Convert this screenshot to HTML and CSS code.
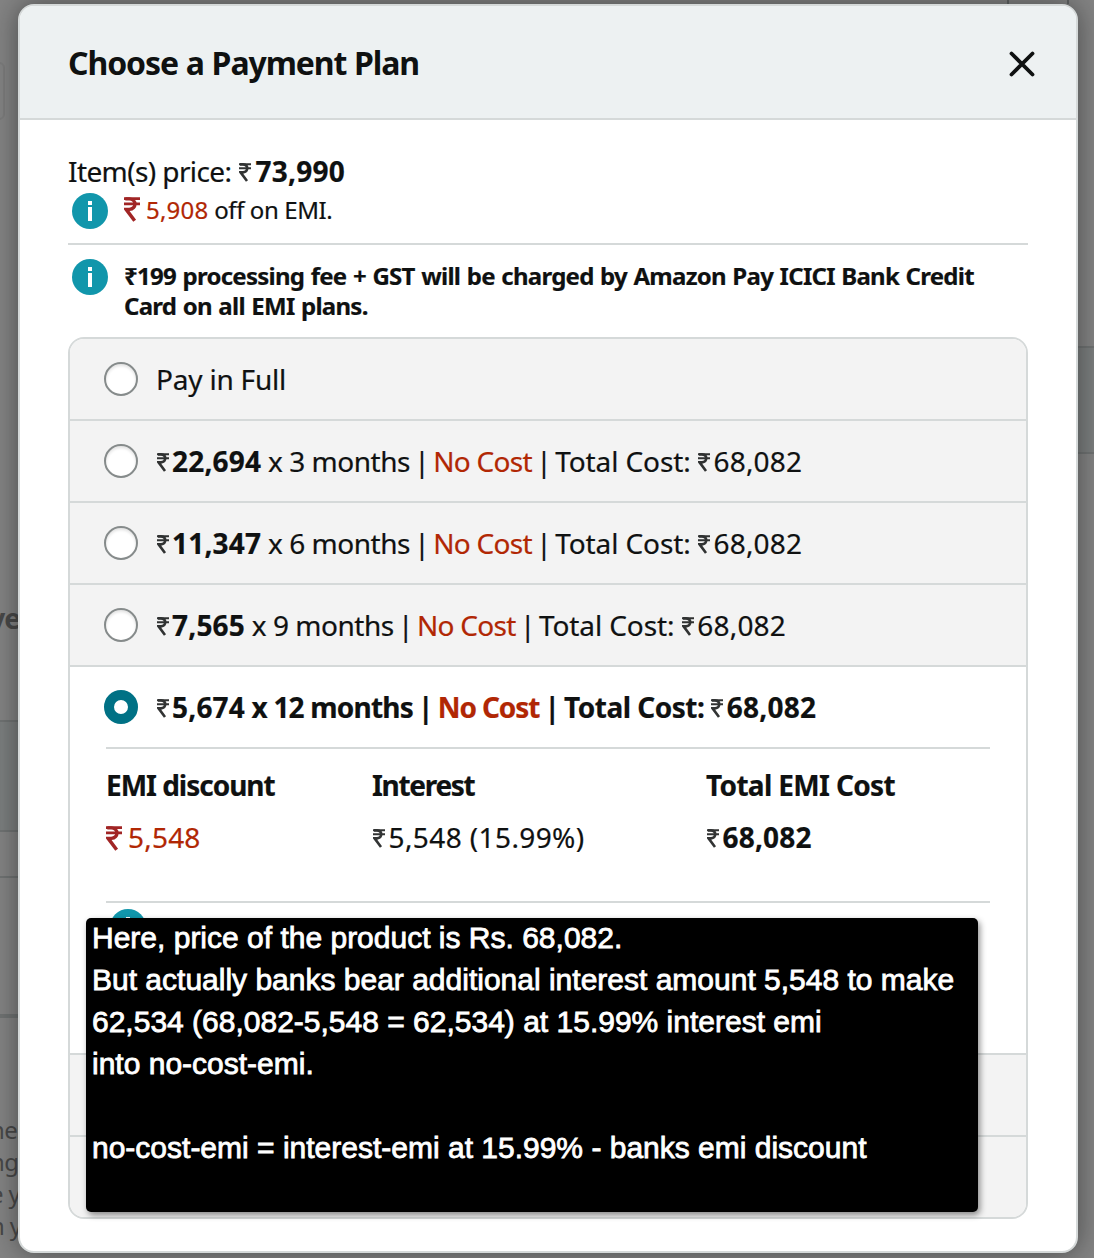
FILE: index.html
```html
<!DOCTYPE html>
<html lang="en">
<head>
<meta charset="utf-8">
<title>Choose a Payment Plan</title>
<link rel="stylesheet" href="styles.css">
</head>
<body>
<svg class="defs" aria-hidden="true">
  <symbol id="rupee" viewBox="0 0 12 19" preserveAspectRatio="none">
    <path d="M0 1.2H12M0 5.2H12" fill="none" stroke="currentColor" stroke-width="2"/>
    <path d="M1 1.4H4C9.6 1.7 9.6 9 4 9.4H1.6L8 18" fill="none" stroke="currentColor" stroke-width="2.6"/>
  </symbol>
</svg>

<div class="backdrop" aria-hidden="true">
  <div class="edge-box"></div>
  <div class="tick tick-a"></div>
  <div class="tick tick-b"></div>
  <div class="right-panel"></div>
  <div class="left-title">ve</div>
  <div class="left-panel"></div>
  <div class="rule rule-a"></div>
  <div class="rule rule-b"></div>
  <div class="left-copy">nes<br>ng<br>e y<br>n y</div>
</div>

<main class="dialog">
  <header class="dialog-header">
    <h1>Choose a Payment Plan</h1>
    <svg class="close" viewBox="0 0 26 26"><path d="M2.5 2.5L23.5 23.5M23.5 2.5L2.5 23.5"/></svg>
  </header>

  <div class="dialog-body">
    <div class="price">Item(s) price: <svg class="rs"><use href="#rupee"/></svg><b class="num">73,990</b></div>
    <div class="offer">
      <svg class="info" viewBox="0 0 36 36"><circle cx="18" cy="18" r="18"/><path d="M16 8h4v4h-4zM16 14h4v14h-4z"/></svg>
      <div><svg class="rs rs-red"><use href="#rupee"/></svg><span class="red num">5,908</span> off on EMI.</div>
    </div>
    <div class="fee">
      <svg class="info" viewBox="0 0 36 36"><circle cx="18" cy="18" r="18"/><path d="M16 8h4v4h-4zM16 14h4v14h-4z"/></svg>
      <p>₹199 processing fee + GST will be charged by Amazon Pay ICICI Bank Credit<br>Card on all EMI plans.</p>
    </div>

    <div class="plans">
      <div class="plan"><i class="radio"></i><span class="label full">Pay in Full</span></div>
      <div class="plan"><i class="radio"></i><span class="label"><svg class="rs"><use href="#rupee"/></svg><b class="num">22,694</b> x 3 months <span class="bar">|</span> <span class="red nc">No Cost</span> <span class="bar">|</span> <span class="tc">Total Cost:</span> <svg class="rs"><use href="#rupee"/></svg><span class="num">68,082</span></span></div>
      <div class="plan"><i class="radio"></i><span class="label"><svg class="rs"><use href="#rupee"/></svg><b class="num">11,347</b> x 6 months <span class="bar">|</span> <span class="red nc">No Cost</span> <span class="bar">|</span> <span class="tc">Total Cost:</span> <svg class="rs"><use href="#rupee"/></svg><span class="num">68,082</span></span></div>
      <div class="plan"><i class="radio"></i><span class="label"><svg class="rs"><use href="#rupee"/></svg><b class="num">7,565</b> x 9 months <span class="bar">|</span> <span class="red nc">No Cost</span> <span class="bar">|</span> <span class="tc">Total Cost:</span> <svg class="rs"><use href="#rupee"/></svg><span class="num">68,082</span></span></div>
      <div class="plan selected">
        <div class="pick"><i class="radio on"></i><span class="label strong"><svg class="rs"><use href="#rupee"/></svg><b class="num">5,674</b> x 12 months <span class="bar">|</span> <span class="red nc">No Cost</span> <span class="bar">|</span> <span class="tc">Total Cost:</span> <svg class="rs"><use href="#rupee"/></svg><span class="num">68,082</span></span></div>
        <div class="breakdown">
          <div><h2>EMI discount</h2><div class="value red"><svg class="rs rs-red"><use href="#rupee"/></svg><span class="num">5,548</span></div></div>
          <div><h2 class="tight">Interest</h2><div class="value"><svg class="rs"><use href="#rupee"/></svg><span class="num pct">5,548 (15.99%)</span></div></div>
          <div><h2 class="wide">Total EMI Cost</h2><div class="value"><svg class="rs"><use href="#rupee"/></svg><b class="num">68,082</b></div></div>
        </div>
        <svg class="info" viewBox="0 0 36 36"><circle cx="18" cy="18" r="18"/><path d="M16 8h4v4h-4zM16 14h4v14h-4z"/></svg>
      </div>
      <div class="plan"></div>
      <div class="plan"></div>
    </div>
  </div>
</main>

<aside class="note"><p>Here, price of the product is Rs. 68,082.
But actually banks bear additional interest amount 5,548 to make
62,534 (68,082-5,548 = 62,534) at 15.99% interest emi
into no-cost-emi.

no-cost-emi = interest-emi at 15.99% - banks emi discount</p></aside>
</body>
</html>
```
FILE: styles.css
```css
* { box-sizing: border-box; }

body {
  margin: 0;
  padding: 4px 16px 5px 18px;
  height: 1258px;
  position: relative;
  overflow: hidden;
  background: #848484;
  color: #0f1111;
  font: 28px/40px "Noto Sans", sans-serif;
}

h1, h2, p { margin: 0; }
.defs { position: absolute; width: 0; height: 0; }

/* dimmed page behind the dialog */
.backdrop { position: absolute; inset: 0; color: #484848; }
.backdrop > div { position: absolute; }
.edge-box { left: -20px; top: 62px; width: 25px; height: 58px; border: 2px solid #7c7c7c; border-radius: 6px; }
.tick { top: 0; width: 2px; height: 4px; background: #606363; }
.tick-a { left: 1007px; }
.tick-b { left: 1067px; }
.right-panel { right: 0; top: 346px; width: 20px; height: 108px; background: #7c7f7f; border: solid #707373; border-width: 2px 0; }
.left-title { right: 1074px; top: 598px; font-weight: bold; letter-spacing: -1px; }
.left-panel { left: 0; top: 720px; width: 20px; height: 112px; background: #7c7f7f; border: solid #707373; border-width: 2px 0; }
.rule { left: 0; width: 20px; background: #707373; }
.rule-a { top: 876px; height: 2px; }
.rule-b { top: 1014px; height: 4px; }
.left-copy { left: -10px; top: 1114px; font-size: 24px; line-height: 32px; letter-spacing: -.7px; white-space: nowrap; }

/* dialog */
.dialog {
  position: relative;
  height: 1249px;
  border: 2px solid #d5d9d9;
  border-radius: 16px;
  background: #fff;
  box-shadow: 0 0 28px rgba(15, 17, 17, .5);
}
.dialog-header {
  display: flex;
  justify-content: space-between;
  align-items: center;
  height: 114px;
  padding: 0 41px 0 48px;
  background: #edf1f2;
  border-bottom: 2px solid #d5d9d9;
  border-radius: 14px 14px 0 0;
}
h1 { padding-top: 1px; font-size: 32px; line-height: 44px; letter-spacing: -1.1px; word-spacing: .6px; }
.close { width: 26px; height: 26px; margin-top: 3px; fill: none; stroke: #0f1111; stroke-width: 3.8; stroke-linecap: round; }
.dialog-body { padding: 31px 48px 0; -webkit-text-stroke: .2px; }

.num { letter-spacing: .2px; }
.pct { letter-spacing: .4px; }
.red { color: #b12704; }
.rs { width: 12px; height: 19px; margin: 0 4.5px 0 1px; vertical-align: 0; filter: blur(.5px); opacity: .85; }
.rs-red { width: 16px; height: 25px; margin: 0 6px 0 0; color: #9c1a1a; vertical-align: -3px; opacity: .95; }
.info { display: block; flex: none; width: 36px; height: 36px; fill: #1196ab; }
.info path { fill: #fff; }

.price { height: 42px; letter-spacing: -.6px; white-space: nowrap; }
.offer {
  display: flex;
  height: 52px;
  padding-left: 4px;
  border-bottom: 2px solid #d5d9d9;
  font-size: 24px;
  line-height: 34px;
  letter-spacing: -.4px;
}
.offer .info, .fee .info { margin-right: 16px; }
.fee {
  display: flex;
  height: 92px;
  padding: 14px 0 0 4px;
  font-size: 24px;
  font-weight: bold;
  line-height: 30px;
  letter-spacing: -.74px;
  word-spacing: 1px;
  white-space: nowrap;
}
.fee p { padding-top: 2px; }

.plans { border: 2px solid #d5d9d9; border-radius: 16px; overflow: hidden; background: #fff; }
.plan { display: flex; align-items: center; height: 82px; padding-left: 34px; background: #f3f3f3; border-bottom: 2px solid #d5d9d9; white-space: nowrap; }
.plan:last-child { border-bottom: 0; height: 80px; }
.radio {
  flex: none;
  width: 34px;
  height: 34px;
  margin-right: 18px;
  border: 2px solid #868b8b;
  border-radius: 50%;
  background: #fff;
  box-shadow: inset 0 2px 3px rgba(15, 17, 17, .12);
}
.radio.on { border: 10px solid #007185; box-shadow: none; }
.label { padding-bottom: 1px; letter-spacing: -.48px; }
.label.full { letter-spacing: -.2px; }
.label .rs { margin: 0 3.5px 0 .5px; }
.label .num { letter-spacing: .2px; }
.label .nc { letter-spacing: -.7px; }
.label .tc { letter-spacing: -.1px; }
.bar { margin: 0 -2.8px 0 -2.5px; }
.label.strong { font-weight: bold; letter-spacing: -.8px; }
.strong b { font-weight: bold; }
.strong .nc { letter-spacing: -1.1px; }
.strong .tc { letter-spacing: -.5px; }
.strong .bar { margin: 0 -1.5px 0 -1.3px; }

.selected { display: block; height: 388px; padding: 0 36px; background: #fff; }
.pick { display: flex; align-items: center; height: 80px; margin-left: -2px; }
.breakdown {
  display: grid;
  grid-template-columns: 266px 334px 1fr;
  height: 156px;
  padding-top: 16px;
  border: solid #d5d9d9;
  border-width: 2px 0;
}
h2 { font-size: 28px; line-height: 40px; letter-spacing: -1.02px; }
h2.tight { letter-spacing: -1.3px; }
h2.wide { letter-spacing: -.66px; }
.value { margin-top: 12px; }
.value .rs:not(.rs-red) { margin: 0 4px 0 .5px; }
.selected > .info { margin: 6px 0 0 4px; }

/* annotation pasted over the dialog */
.note {
  position: absolute;
  left: 86px;
  top: 918px;
  width: 892px;
  height: 294px;
  padding: 0 6px;
  border-radius: 5px;
  background: #000;
  color: #fff;
  box-shadow: 2px 3px 6px rgba(0, 0, 0, .45);
  font: 30px/42px "Liberation Sans", Arial, sans-serif;
  -webkit-text-stroke: .8px #fff;
  white-space: pre;
}
.note p { margin-top: -1px; }
```
